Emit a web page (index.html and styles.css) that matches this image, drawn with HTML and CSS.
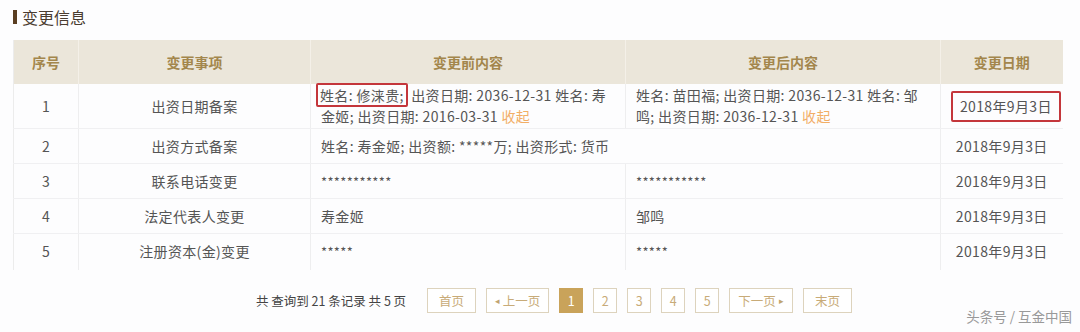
FILE: index.html
```html
<!DOCTYPE html>
<html lang="zh">
<head>
<meta charset="utf-8">
<link rel="stylesheet" href="styles.css">
</head>
<body>
<div class="page">
  <h2 class="title"><span class="bar"></span>变更信息</h2>
  <table class="grid">
    <colgroup>
      <col class="c-no"><col class="c-item"><col class="c-before"><col class="c-after"><col class="c-date">
    </colgroup>
    <thead>
      <tr><th>序号</th><th>变更事项</th><th>变更前内容</th><th>变更后内容</th><th>变更日期</th></tr>
    </thead>
    <tbody>
      <tr class="tall">
        <td class="ctr">1</td>
        <td class="ctr">出资日期备案</td>
        <td class="txt"><span class="mark">姓名: 修涞贵;</span> 出资日期: 2036-12-31 姓名: 寿金姬; 出资日期: 2016-03-31 <a class="fold">收起</a></td>
        <td class="txt">姓名: 苗田福; 出资日期: 2036-12-31 姓名: 邹鸣; 出资日期: 2036-12-31 <a class="fold">收起</a></td>
        <td class="ctr"><span class="mark datebox">2018年9月3日</span></td>
      </tr>
      <tr>
        <td class="ctr">2</td>
        <td class="ctr">出资方式备案</td>
        <td class="txt" colspan="2">姓名: 寿金姬; 出资额: *****万; 出资形式: 货币</td>
        <td class="ctr">2018年9月3日</td>
      </tr>
      <tr>
        <td class="ctr">3</td>
        <td class="ctr">联系电话变更</td>
        <td class="txt stars">***********</td>
        <td class="txt stars">***********</td>
        <td class="ctr">2018年9月3日</td>
      </tr>
      <tr>
        <td class="ctr">4</td>
        <td class="ctr">法定代表人变更</td>
        <td class="txt">寿金姬</td>
        <td class="txt">邹鸣</td>
        <td class="ctr">2018年9月3日</td>
      </tr>
      <tr>
        <td class="ctr">5</td>
        <td class="ctr">注册资本(金)变更</td>
        <td class="txt stars">*****</td>
        <td class="txt stars">*****</td>
        <td class="ctr">2018年9月3日</td>
      </tr>
    </tbody>
  </table>
  <div class="pager">
    <span class="total">共 查询到 21 条记录 共 5 页</span>
    <span class="btn w49">首页</span>
    <span class="btn w63"><span class="arr">&#9666;</span>上一页</span>
    <span class="btn num active">1</span>
    <span class="btn num">2</span>
    <span class="btn num">3</span>
    <span class="btn num">4</span>
    <span class="btn num">5</span>
    <span class="btn w64">下一页<span class="arr">&#9656;</span></span>
    <span class="btn w49">末页</span>
  </div>
  <div class="watermark">头条号 / 互金中国</div>
</div>
</body>
</html>
```
FILE: styles.css
```css
* { box-sizing: border-box; }
html, body { margin: 0; padding: 0; }
body {
  width: 1080px;
  height: 332px;
  overflow: hidden;
  background: #fdfdfe;
  font-family: "Noto Sans CJK SC", "Noto Sans", sans-serif;
  color: #555;
}
.page {
  position: relative;
  height: 332px;
  padding: 6px 18px 0 13px;
}
.title {
  display: flex;
  align-items: center;
  gap: 5px;
  margin: 0 0 12px 0;
  height: 22px;
  font-size: 16px;
  font-weight: normal;
  color: #4a3c30;
}
.bar {
  display: inline-block;
  width: 4px;
  height: 14px;
  background: #5a3e22;
}
.grid {
  width: 1049px;
  border-collapse: collapse;
  table-layout: fixed;
  font-size: 14px;
  border-left: 1px solid #ececec;
}
.c-no { width: 65px; }
.c-item { width: 232px; }
.c-before { width: 315px; }
.c-after { width: 315px; }
.c-date { width: 122px; }
.grid th {
  background: #ebe6da;
  color: #a3864c;
  font-weight: bold;
  height: 44px;
  font-size: 14px;
  border-left: 1px solid #f4f0e8;
}
.grid th:first-child { border-left: none; }
.grid td {
  height: 35px;
  padding: 0 10px;
  line-height: 21px;
  letter-spacing: 0.35px;
  border-bottom: 1px solid #f0f0f2;
  border-left: 1px solid #eeeeef;
  color: #555;
  vertical-align: middle;
}
.grid td:first-child { border-left: none; }
.grid tbody tr:last-child td { border-bottom: none; height: 36px; }
.grid tr.tall td { height: 44px; padding-top: 1px; padding-bottom: 1px; }
.ctr { text-align: center; white-space: nowrap; }
.txt { text-align: left; }
.stars { color: #777; font-size: 13px; }
.fold { color: #f2ae66; text-decoration: none; }
.mark {
  border: 2px solid #c4363b;
  border-radius: 2px;
  padding: 0 2px;
  margin-left: -5px;
}
.datebox {
  display: inline-block;
  padding: 3px 7px;
  margin-left: 0;
}
.pager {
  display: flex;
  align-items: center;
  gap: 10px;
  margin-top: 18px;
  padding-left: 243px;
  font-size: 12.5px;
}
.total { color: #444; margin-right: 11px; }
.btn {
  display: inline-flex;
  align-items: center;
  justify-content: center;
  gap: 3px;
  height: 25px;
  border: 1px solid #ddd3bd;
  color: #c8ab78;
  background: #fff;
}
.arr { font-size: 9px; color: #c0a470; }
.w49 { width: 49px; }
.w63 { width: 63px; }
.w64 { width: 64px; }
.btn.num { width: 24px; }
.btn.active { background: #c9a35a; border-color: #c9a35a; color: #fff; }
.watermark {
  position: absolute;
  right: 8px;
  bottom: 6px;
  font-size: 13.5px;
  color: #999;
}
```
